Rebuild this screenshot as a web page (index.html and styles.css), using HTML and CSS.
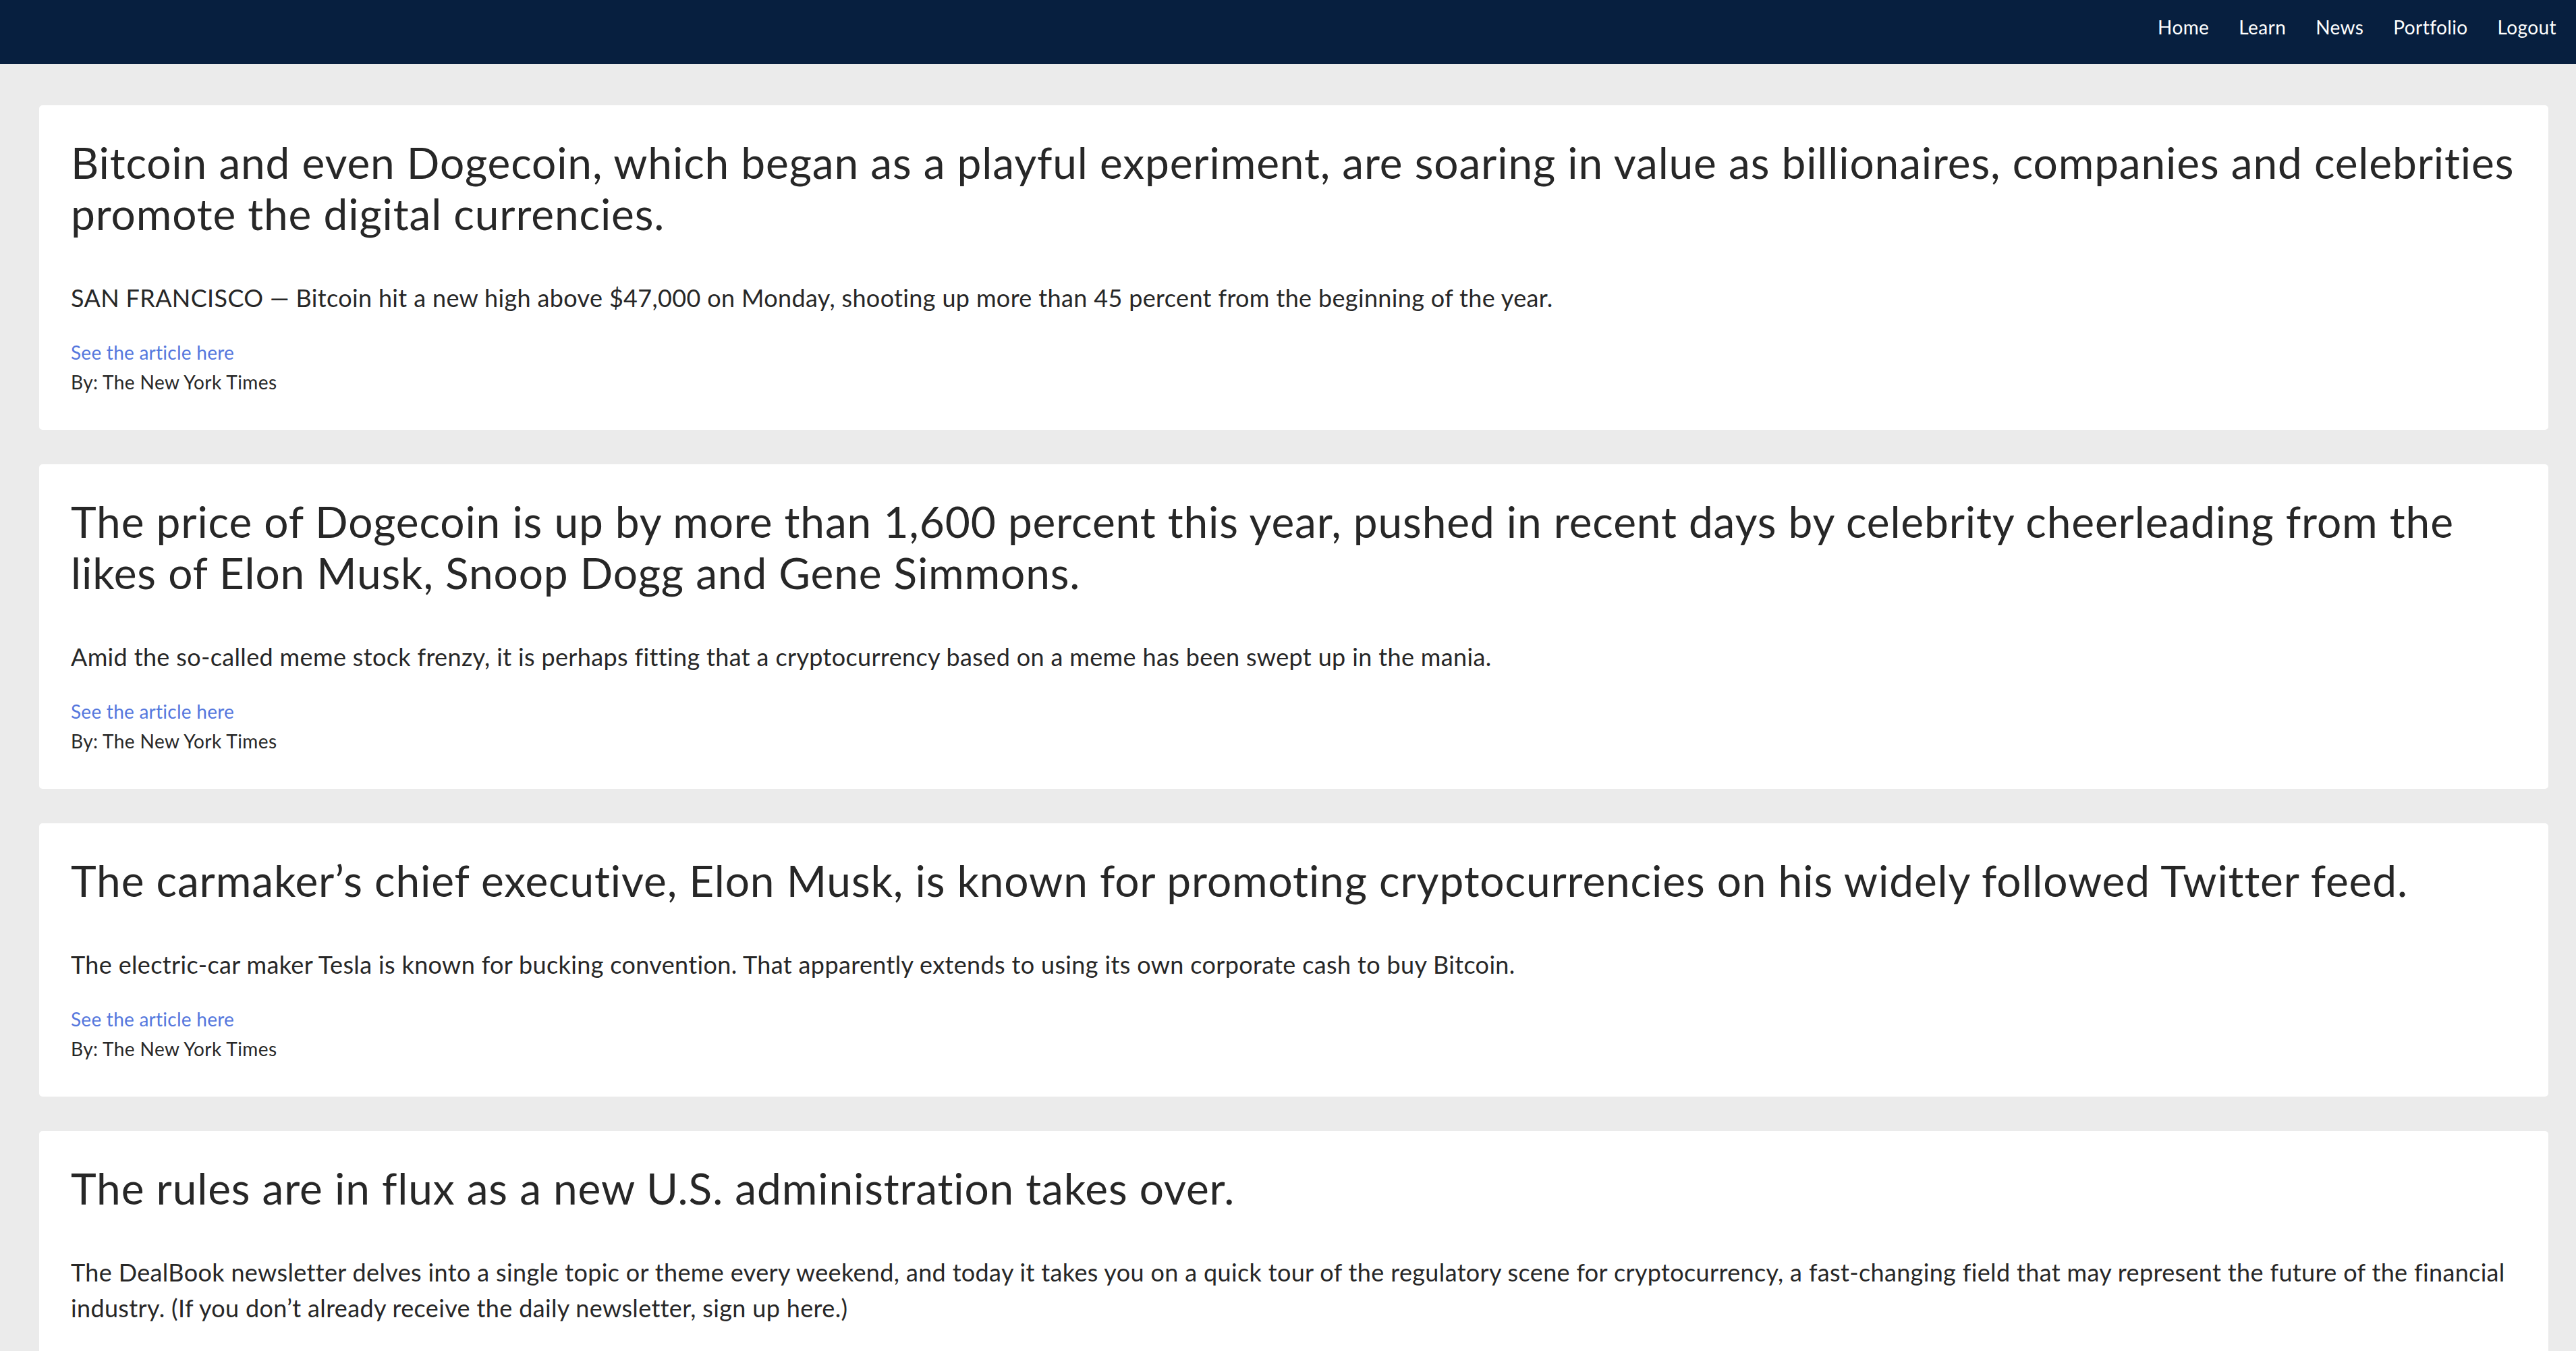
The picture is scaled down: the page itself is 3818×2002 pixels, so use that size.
FILE: index.html
```html
<!DOCTYPE html>
<html lang="en">
<head>
<meta charset="utf-8">
<title>News</title>
<link rel="stylesheet" href="styles.css">
</head>
<body>
<nav class="topbar">
  <ul class="nav-links">
    <li><a href="#" class="nav-link">Home</a></li>
    <li><a href="#" class="nav-link">Learn</a></li>
    <li><a href="#" class="nav-link">News</a></li>
    <li><a href="#" class="nav-link">Portfolio</a></li>
    <li><a href="#" class="nav-link">Logout</a></li>
  </ul>
</nav>
<main class="news-list">
  <article class="news-card">
    <h2 class="news-title">Bitcoin and even Dogecoin, which began as a playful experiment, are soaring in value as billionaires, companies and celebrities promote the digital currencies.</h2>
    <p class="news-summary">SAN FRANCISCO — Bitcoin hit a new high above $47,000 on Monday, shooting up more than 45 percent from the beginning of the year.</p>
    <a href="#" class="news-link">See the article here</a>
    <p class="news-source">By: The New York Times</p>
  </article>
  <article class="news-card">
    <h2 class="news-title">The price of Dogecoin is up by more than 1,600 percent this year, pushed in recent days by celebrity cheerleading from the likes of Elon Musk, Snoop Dogg and Gene Simmons.</h2>
    <p class="news-summary">Amid the so-called meme stock frenzy, it is perhaps fitting that a cryptocurrency based on a meme has been swept up in the mania.</p>
    <a href="#" class="news-link">See the article here</a>
    <p class="news-source">By: The New York Times</p>
  </article>
  <article class="news-card">
    <h2 class="news-title">The carmaker’s chief executive, Elon Musk, is known for promoting cryptocurrencies on his widely followed Twitter feed.</h2>
    <p class="news-summary">The electric-car maker Tesla is known for bucking convention. That apparently extends to using its own corporate cash to buy Bitcoin.</p>
    <a href="#" class="news-link">See the article here</a>
    <p class="news-source">By: The New York Times</p>
  </article>
  <article class="news-card">
    <h2 class="news-title">The rules are in flux as a new U.S. administration takes over.</h2>
    <p class="news-summary">The DealBook newsletter delves into a single topic or theme every weekend, and today it takes you on a quick tour of the regulatory scene for cryptocurrency, a fast-changing field that may represent the future of the financial industry. (If you don’t already receive the daily newsletter, sign up here.)</p>
    <a href="#" class="news-link">See the article here</a>
    <p class="news-source">By: The New York Times</p>
  </article>
</main>
</body>
</html>
```

FILE: styles.css
```css
html, body {
  margin: 0;
  padding: 0;
}
body {
  background: #ebebeb;
  font-family: "Lato", "Open Sans", sans-serif;
  color: #272727;
}
.topbar {
  background: #071f3f;
  height: 95px;
  display: flex;
  justify-content: flex-end;
  align-items: flex-start;
  padding-right: 7px;
}
.nav-links {
  list-style: none;
  margin: 0;
  padding: 0;
  display: flex;
  height: 80px;
  align-items: center;
}
.nav-link {
  display: block;
  color: #ffffff;
  text-decoration: none;
  font-size: 28px;
  letter-spacing: 0.4px;
  padding: 0 22px;
}
.news-list {
  display: flex;
  flex-direction: column;
  gap: 51px;
  padding: 61px 41px 60px 58px;
}
.news-card {
  background: #ffffff;
  border-radius: 5px;
  padding: 47px 47px 49px 47px;
}
.news-title {
  margin: 0 0 60px 0;
  font-size: 64px;
  font-weight: 400;
  line-height: 76px;
  letter-spacing: 0.85px;
}
.news-summary {
  margin: 0 0 32px 0;
  font-size: 36px;
  line-height: 53px;
  letter-spacing: 0.35px;
}
.news-link {
  display: block;
  color: #5577dd;
  text-decoration: none;
  font-size: 28px;
  line-height: 44px;
  letter-spacing: 0.25px;
}
.news-source {
  margin: 0;
  font-size: 28px;
  line-height: 44px;
  letter-spacing: 0.4px;
}
```
